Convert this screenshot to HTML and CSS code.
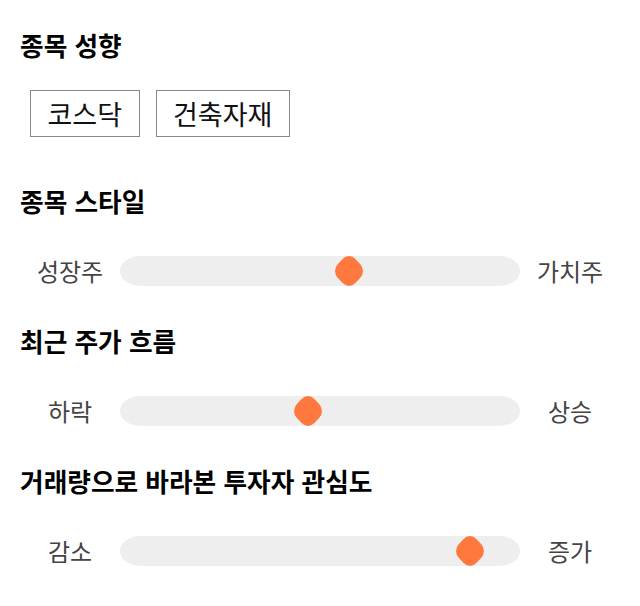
FILE: index.html
```html
<!DOCTYPE html>
<html lang="ko">
<head>
  <meta charset="UTF-8" />
  <meta name="viewport" content="width=device-width, initial-scale=1.0"/>
  <title>종목 성향</title>
  <link rel="stylesheet" href="styles.css">
</head>
<body>
  <section class="block">
    <h2>종목 성향</h2>
    <div class="tags">
      <span class="tag">코스닥</span>
      <span class="tag">건축자재</span>
    </div>
  </section>

  <section class="block">
    <h2>종목 스타일</h2>
    <div class="scale">
      <span class="scale-label">성장주</span>
      <div class="track"><span class="thumb" style="left: 57.25%"></span></div>
      <span class="scale-label">가치주</span>
    </div>
  </section>

  <section class="block">
    <h2>최근 주가 흐름</h2>
    <div class="scale">
      <span class="scale-label">하락</span>
      <div class="track"><span class="thumb" style="left: 47%"></span></div>
      <span class="scale-label">상승</span>
    </div>
  </section>

  <section class="block">
    <h2>거래량으로 바라본 투자자 관심도</h2>
    <div class="scale">
      <span class="scale-label">감소</span>
      <div class="track"><span class="thumb" style="left: 87.5%"></span></div>
      <span class="scale-label">증가</span>
    </div>
  </section>
</body>
</html>
```

FILE: styles.css
```css
* { margin: 0; padding: 0; box-sizing: border-box; }
body {
  font-family: "Noto Sans CJK KR", "Noto Sans", sans-serif;
  background: #fff;
  color: #000;
  padding: 27px 20px 0;
}
.block {
  margin-bottom: 27px;
}
.block h2 {
  font-size: 25.7px;
  font-weight: 700;
  line-height: 36px;
  margin-bottom: 27px;
}
.tags {
  display: flex;
  gap: 16px;
  padding: 0 10px 19px;
}
.tag {
  border: 1px solid #888;
  font-size: 27px;
  line-height: 45px;
  padding: 0 16.5px;
  color: #111;
}
.scale {
  display: flex;
  align-items: center;
  padding: 10px 0;
}
.scale-label {
  width: 100px;
  text-align: center;
  font-size: 24px;
  line-height: 30px;
  color: #444;
}
.track {
  position: relative;
  flex: 1;
  height: 30px;
  background: #eee;
  border-radius: 20px / 15px;
}
.thumb {
  position: absolute;
  top: 50%;
  width: 25px;
  height: 25px;
  background: #ff793f;
  border-radius: 9px;
  transform: translate(-50%, -50%) scaleY(1.07) rotate(45deg);
}
```
